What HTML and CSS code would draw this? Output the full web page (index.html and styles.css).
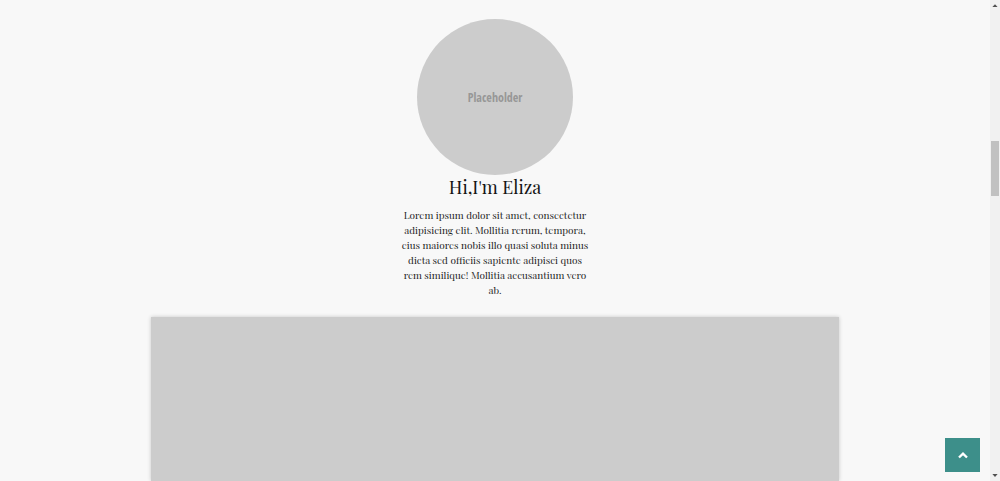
FILE: index.html
```html
<!DOCTYPE html>
<html lang="en">
<head>
<meta charset="utf-8">
<meta name="viewport" content="width=device-width, initial-scale=1">
<title>Hi, I'm Eliza</title>
<link rel="stylesheet" href="styles.css">
</head>
<body>
<div class="page">
  <main class="content">
    <section class="about">
      <div class="avatar"><span class="avatar-label">Placeholder</span></div>
      <h1 class="title">Hi,I'm Eliza</h1>
      <p class="bio">Lorem ipsum dolor sit amet, consectetur<br>adipisicing elit. Mollitia rerum, tempora,<br>eius maiores nobis illo quasi soluta minus<br>dicta sed officiis sapiente adipisci quos<br>rem similique! Mollitia accusantium vero<br>ab.</p>
    </section>
    <section class="banner"></section>
  </main>
  <div class="scrollbar" aria-hidden="true">
    <svg class="arrow" viewBox="0 0 10 10"><path d="M2.4 7 5 4.2 7.6 7Z"/></svg>
    <div class="track"><div class="thumb"></div></div>
    <svg class="arrow" viewBox="0 0 10 10"><path d="M2.4 3 5 6 7.6 3Z"/></svg>
  </div>
</div>
<button class="to-top" type="button" aria-label="Back to top">
  <svg class="chevron" viewBox="0 0 12 8"><path d="M2 6.5 6 2.7 10 6.5"/></svg>
</button>
</body>
</html>
```
FILE: styles.css
```css
* {
  box-sizing: border-box;
}

body {
  margin: 0;
  background: #f8f8f8;
  color: #1f1f1f;
  font-family: "Playfair Display", "Liberation Serif", serif;
}

.page {
  display: flex;
  height: 100vh;
  overflow: hidden;
}

.content {
  flex: 1;
  display: flex;
  flex-direction: column;
  align-items: center;
  gap: 19px;
  padding-top: 19px;
}

.about {
  display: flex;
  flex-direction: column;
  align-items: center;
  text-align: center;
}

.avatar {
  display: grid;
  place-items: center;
  width: 156px;
  height: 156px;
  border-radius: 50%;
  background: #ccc;
}

.avatar-label {
  color: #979797;
  font: 12px "Open Sans Condensed", "Liberation Sans Narrow", "Liberation Sans", sans-serif;
}

.title {
  margin: 0 0 8px;
  color: #151515;
  font-size: 18px;
  font-weight: 400;
  line-height: 25px;
}

.bio {
  margin: 0;
  font-size: 10px;
  line-height: 15px;
  white-space: nowrap;
}

.banner {
  flex: 1;
  width: 69.5%;
  background: #ccc;
  box-shadow: 0 0 4px rgba(0, 0, 0, 0.2);
}

.scrollbar {
  display: flex;
  flex-direction: column;
  width: 10px;
  background: #f1f1f1;
}

.arrow {
  width: 10px;
  height: 10px;
  fill: #505050;
}

.track {
  flex: 1;
  padding: 131px 1px 0;
}

.thumb {
  height: 55px;
  background: #c1c1c1;
}

.to-top {
  position: fixed;
  right: 20px;
  bottom: 9px;
  display: grid;
  place-items: center;
  width: 35px;
  height: 34px;
  padding: 0;
  border: 0;
  background: #3d8f8a;
  cursor: pointer;
}

.chevron {
  width: 12px;
  height: 8px;
  fill: none;
  stroke: #fff;
  stroke-width: 2.4;
}
```
